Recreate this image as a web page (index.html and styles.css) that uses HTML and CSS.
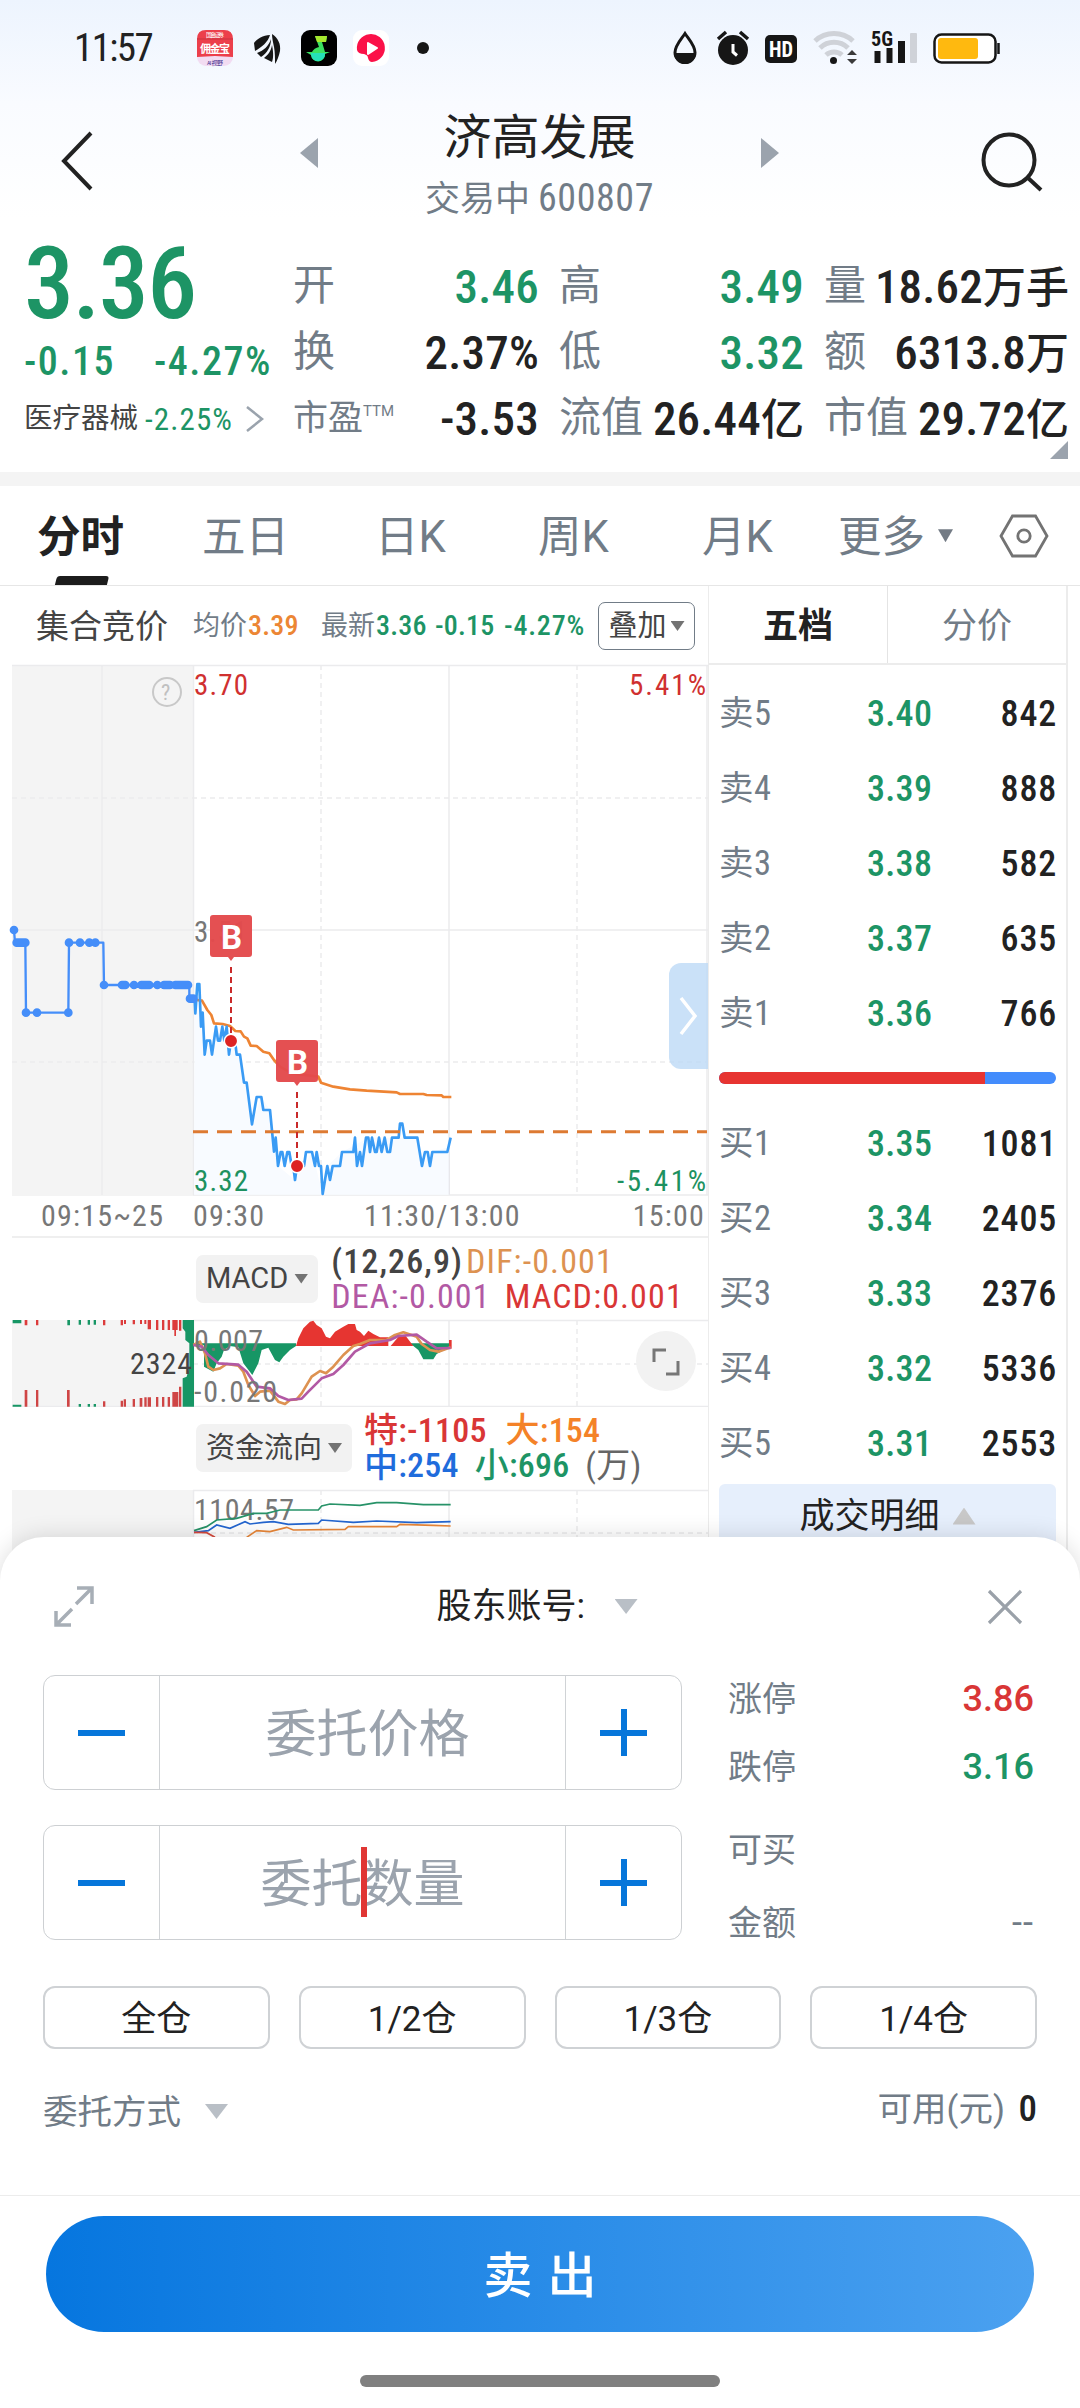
FILE: index.html
```html
<!DOCTYPE html>
<html lang="zh-CN">
<head>
    <meta charset="UTF-8">
    <meta name="viewport" content="width=device-width, initial-scale=1.0">
    <title>济高发展 600807</title>
    <link rel="stylesheet" href="styles.css">
</head>
<body>
    <div class="top">
        <div class="statusbar">
            <span class="time">11:57</span>
            <svg class="app-icons" width="240" height="40" viewBox="193 28 240 40">
                <rect x="197" y="30" width="36" height="36" rx="9" fill="#f2dcf2"/>
                <path d="M197 39q0-9 9-9h18q9 0 9 9v18l-18-1-18 1z" fill="#ec3f4b"/>
                <path d="M197 39h36" stroke="#c93440"/>
                <text x="206" y="37" font-size="6" fill="#fff" textLength="18">国金证券</text>
                <text x="200" y="53" font-size="11" font-weight="700" fill="#fff" textLength="30">佣金宝</text>
                <text x="207" y="65" font-size="6" fill="#3c2a8c" textLength="16">AI 视野</text>
                <path d="M272 34c6 4 9 10 8 17-1 5-3 10-5 13 0-6 0-12-1-17-1-5-2-9-2-13zM270 35c-7 0-13 4-16 8l1 8c7-4 13-9 15-16zM271 39c-2 7-8 12-14 14l4 4c6-4 10-10 10-18zM272 45c-1 6-4 10-8 13l8 4c2-5 1-12 0-17z" fill="#161616"/>
                <rect x="301" y="30" width="36" height="36" rx="9" fill="#000"/>
                <path d="M315 36h12l-1 6h-4l3 10h5l-5 2a7 7 0 0 1-14 1l-5-3h6q2-4 7-5z" fill="#3be060"/>
                <path d="M311 53h14a7 7 0 0 1-14 2z" fill="#26e0b8"/>
                <path d="M315 36h12l-1 6h-9z" fill="#a6e82e"/>
                <rect x="353" y="30" width="36" height="36" rx="9" fill="#fff"/>
                <path d="M357 50a14 14 0 1 1 15 12q-3 0-4-4 0-3-4-4-6 0-7-4z" fill="#fb1148"/>
                <path d="M368 43l9 5-9 6z" fill="#fff" stroke="#fff" stroke-width="2" stroke-linejoin="round"/>
                <circle cx="423" cy="48" r="6" fill="#161616"/>
            </svg>
            <svg class="sys-icons" width="332" height="40" viewBox="672 28 332 40">
                <path d="M686 33.500c4 6 10 12 10 19a10 10 0 0 1-20 0c0-7 6-13 10-19z" fill="none" stroke="#161616" stroke-width="3"/>
                <path d="M675 53h22a11 11 0 0 1-22 0z" fill="#161616"/>
                <circle cx="734" cy="50" r="15" fill="#161616"/>
                <path d="M719 39l8-7M749 39l-8-7" stroke="#161616" stroke-width="3.500"/>
                <path d="M734 44v8l4 3.500" stroke="#fff" stroke-width="3" fill="none"/>
                <rect x="766" y="35" width="32" height="28" rx="5" fill="#161616"/>
                <text x="770" y="57" font-size="22" font-weight="700" fill="#fff" textLength="24" lengthAdjust="spacingAndGlyphs">HD</text>
                <g fill="none" stroke="#cfd2d8" stroke-width="5">
                    <path d="M816 41a28 28 0 0 1 38 0M821 48a20 20 0 0 1 28 0M827 55a12 12 0 0 1 16 0"/>
                </g>
                <circle cx="834.500" cy="60.500" r="3.500" fill="#161616"/>
                <path d="M848 55l5-5 5 5zM848 59l5 5 5-5z" fill="#3a3a3a"/>
                <text x="872" y="46" font-size="20" font-weight="700" fill="#161616" textLength="22" lengthAdjust="spacingAndGlyphs">5G</text>
                <path d="M875.500 51h6v12h-6zM887.500 48h6v15h-6zM899 41h7v22h-7z" fill="#161616"/>
                <rect x="911" y="33" width="7" height="30" rx="1" fill="#cfd2d8"/>
                <rect x="935.500" y="34.500" width="61" height="28" rx="7" fill="#fff" stroke="#161616" stroke-width="2.500"/>
                <rect x="939" y="38" width="40" height="21" rx="3" fill="#ffb90f"/>
                <path d="M999.500 43v11" stroke="#161616" stroke-width="2.500"/>
            </svg>
        </div>

        <div class="header">
            <svg class="back" width="34" height="60" viewBox="0 0 34 60"><path d="M31 2L4 30l27 28" fill="none" stroke="#222" stroke-width="4"/></svg>
            <i class="tri-left"></i>
            <div class="title">
                <h1>济高发展</h1>
                <p>交易中 <span class="code">600807</span></p>
            </div>
            <i class="tri-right"></i>
            <svg class="search" width="64" height="64" viewBox="0 0 64 64"><g fill="none" stroke="#222" stroke-width="4"><circle cx="29" cy="29" r="25.500"/><path d="M47 46l14 13"/></g></svg>
        </div>
    </div>

    <div class="quote">
        <div class="main-price">
            <div class="price">3.36</div>
            <div class="change"><span>-0.15</span><span>-4.27%</span></div>
            <div class="sector">医疗器械 <span>-2.25%</span>
                <svg width="20" height="28" viewBox="0 0 20 28"><path d="M2 2l15 12L2 26" fill="none" stroke="#9aa3ad" stroke-width="2.500"/></svg>
            </div>
        </div>
        <dl class="stats">
            <div><dt>开</dt><dd class="green">3.46</dd></div>
            <div><dt>高</dt><dd class="green">3.49</dd></div>
            <div><dt>量</dt><dd>18.62<b>万手</b></dd></div>
            <div><dt>换</dt><dd>2.37%</dd></div>
            <div><dt>低</dt><dd class="green">3.32</dd></div>
            <div><dt>额</dt><dd>6313.8<b>万</b></dd></div>
            <div><dt class="pe">市盈<sup>TTM</sup></dt><dd>-3.53</dd></div>
            <div><dt>流值</dt><dd>26.44<b>亿</b></dd></div>
            <div><dt>市值</dt><dd>29.72<b>亿</b></dd></div>
        </dl>
        <i class="corner"></i>
    </div>

    <div class="tabs">
        <span class="tab active">分时</span>
        <span class="tab">五日</span>
        <span class="tab">日K</span>
        <span class="tab">周K</span>
        <span class="tab">月K</span>
        <span class="tab more">更多<i class="tri-down"></i></span>
        <svg class="gear" width="50" height="44" viewBox="0 0 50 44"><g fill="none" stroke="#737373" stroke-width="2.800"><path d="M2 22L13.500 2h23L48 22 36.500 42h-23z"/><circle cx="25" cy="22" r="6.200"/></g></svg>
    </div>

    <div class="market">
        <div class="charts">
            <div class="chart-head">
                <span class="auction">集合竞价</span>
                <span class="lbl">均价</span><span class="val orange">3.39</span>
                <span class="lbl latest">最新</span><span class="val green">3.36</span>
                <span class="val green delta">-0.15</span>
                <span class="val green pct">-4.27%</span>
                <span class="overlay-btn">叠加<i class="tri-down"></i></span>
            </div>

            <div class="price-plot">
                <svg width="708" height="532" viewBox="0 664 708 532">
                    <rect x="12" y="665" width="181.500" height="531" fill="#f4f4f4"/>
                    <g class="grid">
                        <path d="M12 665.500h696M193 930h515M12 930h181M102 665v530M193.500 665v530M449 665v530M707 665v530M193 1195h515"/>
                        <path class="dash" d="M12 798h696M12 1062h696M321 665v530M577 665v530"/>
                    </g>
                    <circle cx="167" cy="692" r="14" fill="none" stroke="#c8c8c8" stroke-width="2"/>
                    <text x="161" y="700" font-size="22" fill="#c0c0c0">?</text>
                    <g transform="translate(0 880) scale(.33333)" fill="none" stroke-linejoin="round">
                        <path fill="#f8fbff" d="M584 356L598 330 603 440 614 524 648 440 705 482 720 524 740 608 756 733 784 651 810 690 822 815 834 858 885 900 936 816 968 942 982 858 1026 816 1105 773 1196 773 1252 773 1266 858 1297 816 1348 800V944H582z"/>
                        <path stroke="#e8e8ec" stroke-width="4" d="M1348 780v164"/>
                        <path stroke="#ee8433" stroke-width="8" d="M590 360L606 362 622 390 634 405 642 430 668 432 690 438 706 453 722 454 732 470 742 475 752 497 770 498 790 515 808 520 822 540 840 560 875 580 955 590 963 608 1000 620 1050 628 1100 632 1190 637 1200 642 1270 642 1280 645 1325 646 1330 651 1354 651"/>
                        <path stroke="#3a9bf4" stroke-width="8" d="M584 356L586 400 592 312 598 312 603 440 608 398 614 524 620 482 630 482 636 524 648 440 654 482 660 482 667 440 673 482 680 440 687 524 693 482 705 482 710 524 720 524 732 608 740 608 756 733 770 651 784 651 790 690 810 690 822 815 827 773 834 858 842 816 847 816 854 858 862 816 868 816 875 858 880 858 885 900 891 858 912 858 918 816 936 816 945 858 950 816 957 858 963 858 968 942 982 858 990 900 998 858 1020 858 1026 816 1060 816 1065 773 1071 858 1080 816 1086 858 1098 773 1105 773 1110 816 1116 773 1125 816 1130 816 1137 773 1145 816 1154 773 1162 816 1170 816 1176 773 1196 773 1200 731 1207 731 1214 773 1252 773 1266 858 1275 816 1283 816 1290 858 1297 816 1342 816 1352 773"/>
                        <path stroke="#458ef9" stroke-width="7" d="M42 150L45 188H76L78 398H205L207 188H310L312 315H568V356H585"/>
                        <path stroke="#458ef9" stroke-width="26" stroke-linecap="round" d="M42 150h0M50 188h26M78 398h0M111 398h0M205 398h0M207 188h0M240 188h0M268 188h0M286 188h0M312 315h0M366 315h10M402 315h0M424 315h24M472 315h0M492 315h18M526 315h38M570 356h10"/>
                    </g>
                    <path d="M193 1131.700h514" stroke="#dd7a32" stroke-width="3" stroke-dasharray="15 9"/>
                    <text x="194" y="942" font-size="29" fill="#777" textLength="53">3.51</text>
                    <g stroke="#c92a2a" stroke-width="2" stroke-dasharray="6 4">
                        <path d="M231 967v66M297 1092v68"/>
                    </g>
                    <g fill="#e34a4c" fill-opacity=".97">
                        <path d="M213 915h36q3 0 3 3v36q0 3-3 3h-15l-3 4-3-4h-15q-3 0-3-3v-36q0-3 3-3z"/>
                        <path d="M279 1040h36q3 0 3 3v36q0 3-3 3h-15l-3 4-3-4h-15q-3 0-3-3v-36q0-3 3-3z"/>
                    </g>
                    <g fill="#dd2222" stroke="#fff" stroke-width="1.500"><circle cx="231" cy="1041" r="6.700"/><circle cx="297" cy="1166" r="6.700"/></g>
                    <g class="marks"><text x="231.500" y="949">B</text><text x="297.500" y="1074">B</text></g>
                    <text x="194" y="695" font-size="29" fill="#d03030" textLength="54">3.70</text>
                    <text x="629" y="695" font-size="29" fill="#d03030" textLength="77">5.41%</text>
                    <text x="194" y="1191" font-size="29" fill="#1d9160" textLength="54">3.32</text>
                    <text x="617" y="1191" font-size="29" fill="#1d9160" textLength="89">-5.41%</text>
                </svg>
                <span class="expand-side"><svg width="20" height="40" viewBox="0 0 20 40"><path d="M2 2l14 18L2 38" fill="none" stroke="#fff" stroke-width="3.500"/></svg></span>
            </div>

            <div class="axis"><span>09:15~25</span><span>09:30</span><span>11:30/13:00</span><span>15:00</span></div>

            <div class="indicator">
                <span class="pill">MACD<i class="tri-down"></i></span>
                <div class="figures macd">
                    <div><span class="dark">(12,26,9)</span><span class="dif">DIF:-0.001</span></div>
                    <div><span class="dea">DEA:-0.001</span><span class="red">MACD:0.001</span></div>
                </div>
            </div>

            <div class="macd-plot">
                <svg width="708" height="88" viewBox="0 1319 708 88">
                    <rect x="12" y="1320" width="181.500" height="87" fill="#f4f4f4"/>
                    <g class="grid"><path d="M193 1320.500h515M12 1406.500h696M193.500 1320v86M449 1320v86"/><path class="dash" d="M193 1364h515M321 1320v86M577 1320v86"/></g>
                    <g transform="translate(0 1200) scale(.33333)">
                        <path fill="#179665" d="M548 360H582V620H548V535L560 530 568 500V430L556 420V395L548 385zM38 360h26v10H38zM38 614h26v6H38zM202 360h8v16h-8zM236 360h7v14h-7zM263 360h7v14h-7zM281 360h7v14h-7zM236 612h7v8h-7zM263 612h7v8h-7zM281 612h7v8h-7z"/>
                        <path fill="#dc3b3b" d="M74 360h8v16h-8zM108 360h7v16h-7zM309 360h7v16h-7zM362 360h7v16h-7zM372 360h6v12h-6zM398 360h7v13h-7zM420 360h6v12h-6zM433 360h6v12h-6zM443 360h10v28h-10zM468 360h7v30h-7zM486 360h7v30h-7zM503 360h7v30h-7zM517 360h16v30h-5v18h-5v-18h-6zM537 360h7v32h-7z"/>
                        <path fill="#cf4545" d="M74 570h8v50h-8zM108 570h7v50h-7zM201 570h8v50h-8zM309 604h7v16h-7zM362 602h7v18h-7zM371 598h7v22h-7zM398 597h7v23h-7zM419 594h8v26h-8zM433 592h20v28h-20zM468 591h7v29h-7zM486 591h7v29h-7zM503 591h7v29h-7zM517 576h18v44h-18zM537 560h7v60h-7z"/>
                        <path fill="#f4f4f4" d="M440 590h3v30h-3z"/>
                        <path fill="#179665" d="M584 430H888V438L870 450 850 470 838 487 825 480 805 443 785 450 775 490 757 525 730 490 715 442 690 438 672 450 665 470 650 490 640 515 612 500V436H584zM1230 430H1352V440L1310 462 1300 478H1270L1255 450z"/>
                        <path fill="#e63531" d="M888 438L895 415 910 385 930 365 940 362 950 375 965 385 978 410 990 415 1005 395 1030 380 1045 372H1065L1070 390 1080 395 1092 408 1105 392 1120 402 1140 412H1165V438zM1172 438L1200 405 1215 405 1240 438zM1347 420h8v26h-8z"/>
                        <g fill="none" stroke-width="8" stroke-linejoin="round">
                            <path stroke="#dd9251" d="M580 435L600 425 615 460 625 500 640 510 660 505 680 492 715 497 730 515 745 555 765 588 780 575 810 572 835 605 855 612 870 600 890 598 905 580 935 530 960 513 978 520 1000 500 1030 465 1060 438 1080 432 1110 420 1160 420 1185 405 1210 397 1235 405 1250 410 1265 432 1290 450 1315 455 1352 442"/>
                            <path stroke="#b259a4" d="M580 435L605 440 625 465 655 490 715 494 740 515 770 560 810 565 835 588 865 600 905 596 925 575 965 535 1000 522 1030 495 1065 455 1110 430 1170 420 1195 408 1250 404 1280 425 1310 445 1352 444"/>
                        </g>
                    </g>
                    <g font-size="30" fill="#777"><text x="194" y="1351" textLength="69">0.007</text><text x="194" y="1402" textLength="83">-0.020</text></g>
                    <text x="130" y="1374" font-size="30" fill="#444" textLength="62">2324</text>
                    <circle cx="666" cy="1361" r="30" fill="#f2f2f2"/>
                    <path d="M654 1362v-12h12M666 1374h12v-13" fill="none" stroke="#777" stroke-width="3"/>
                </svg>
            </div>

            <div class="indicator flow-row">
                <span class="pill">资金流向<i class="tri-down"></i></span>
                <div class="figures flow">
                    <div><span class="red">特:-1105</span><span class="amber">大:154</span></div>
                    <div><span class="blue">中:254</span><span class="green">小:696</span><span class="unit">(万)</span></div>
                </div>
            </div>

            <div class="flow-plot">
                <svg width="708" height="110" viewBox="0 1489 708 110">
                    <rect x="12" y="1490" width="181.500" height="110" fill="#f4f4f4"/>
                    <g class="grid"><path d="M193 1490.500h515M193.500 1490v110M449 1490v110"/><path class="dash" d="M193 1533h515M321 1490v110M577 1490v110"/></g>
                    <text x="194" y="1520" font-size="30" fill="#777" textLength="100">1104.57</text>
                    <g transform="translate(0 1200) scale(.33333)" fill="none" stroke-width="5">
                        <path stroke="#279268" d="M582 992L620 980 650 960 710 955 760 940 800 940 840 930 955 930 965 918 990 912 1080 916 1130 908 1190 908 1270 914 1352 914"/>
                        <path stroke="#2466d0" d="M582 997L625 992 650 975 690 985 735 965 750 972 790 967 820 965 865 973 955 970 965 960 1060 967 1130 963 1250 968 1352 965"/>
                        <path stroke="#e88638" d="M740 1012L770 992 810 995 860 982 880 990 1035 988 1045 980 1190 980 1200 973 1300 976 1352 978"/>
                        <path stroke="#d64a3c" d="M582 997L620 998 645 1012"/>
                    </g>
                </svg>
            </div>
        </div>

        <div class="book">
            <div class="book-tabs"><span class="active">五档</span><span>分价</span></div>
            <ul>
                <li><span>卖5</span><em>3.40</em><b>842</b></li>
                <li><span>卖4</span><em>3.39</em><b>888</b></li>
                <li><span>卖3</span><em>3.38</em><b>582</b></li>
                <li><span>卖2</span><em>3.37</em><b>635</b></li>
                <li><span>卖1</span><em>3.36</em><b>766</b></li>
            </ul>
            <div class="ratio"><i></i></div>
            <ul>
                <li><span>买1</span><em>3.35</em><b>1081</b></li>
                <li><span>买2</span><em>3.34</em><b>2405</b></li>
                <li><span>买3</span><em>3.33</em><b>2376</b></li>
                <li><span>买4</span><em>3.32</em><b>5336</b></li>
                <li><span>买5</span><em>3.31</em><b>2553</b></li>
            </ul>
            <div class="detail">成交明细<i class="tri-up"></i></div>
        </div>
    </div>

    <div class="sheet">
        <div class="sheet-head">
            <svg width="42" height="42" viewBox="0 0 42 42"><g fill="none" stroke="#a7aeb6" stroke-width="3.500"><path d="M24 2h15v16M38 3L23 18M18 39H3V25M4 38l15-15"/></g></svg>
            <div class="account">股东账号:<i class="tri-down"></i></div>
            <svg width="36" height="36" viewBox="0 0 36 36"><path d="M2 2l32 32M34 2L2 34" stroke="#9aa1a9" stroke-width="3.200"/></svg>
        </div>

        <div class="order">
            <div class="inputs">
                <div class="stepper"><i class="minus"></i><span>委托价格</span><i class="plus"></i></div>
                <div class="stepper qty"><i class="minus"></i><span>委托<u></u>数量</span><i class="plus"></i></div>
            </div>
            <dl class="limits">
                <div><dt>涨停</dt><dd class="red">3.86</dd></div>
                <div><dt>跌停</dt><dd class="green">3.16</dd></div>
                <div class="buyable"><dt>可买</dt><dd></dd></div>
                <div class="amount"><dt>金额</dt><dd>--</dd></div>
            </dl>
        </div>

        <div class="quick"><span>全仓</span><span>1/2仓</span><span>1/3仓</span><span>1/4仓</span></div>

        <div class="method">
            <span>委托方式<i class="tri-down"></i></span>
            <span class="available">可用(元) <b>0</b></span>
        </div>

        <div class="action"><button class="sell">卖 出</button></div>
        <div class="home-bar"></div>
    </div>
</body>
</html>
```

FILE: styles.css
```css
* {
    box-sizing: border-box;
    margin: 0;
    padding: 0;
}

body {
    width: 1080px;
    height: 2408px;
    overflow: hidden;
    background: #fff;
    color: #222;
    font-family: Roboto, "Noto Sans CJK SC", sans-serif;
    font-stretch: 87.5%;
    font-weight: 400;
    line-height: 1;
    white-space: nowrap;
}

svg {
    display: block;
    flex: none;
}

i, em, b {
    font-style: normal;
    font-weight: 500;
}

.green { color: #1d9465; }
.red { color: #d93636; }
.orange { color: #ec8634; }
.amber { color: #f48228; }
.blue { color: #1f6cdc; }
.dark { color: #444; }
.dif { color: #dd9251; }
.dea { color: #b259a4; }
.unit { color: #666; }

/* triangles */
.tri-down, .tri-up, .tri-left, .tri-right {
    display: inline-block;
    flex: none;
    background: #737b85;
}

.tri-down { clip-path: polygon(0 0, 100% 0, 50% 100%); }
.tri-up { clip-path: polygon(50% 0, 100% 100%, 0 100%); }
.tri-left { clip-path: polygon(100% 0, 100% 100%, 0 50%); }
.tri-right { clip-path: polygon(0 0, 100% 50%, 0 100%); }

/* status bar and title */
.top {
    height: 230px;
    background: linear-gradient(#edf4fe, #f9fbff 45%, #fff 95%);
}

.statusbar {
    display: flex;
    align-items: center;
    height: 96px;
    padding: 0 77px 0 74px;
}

.time {
    width: 119px;
    font-size: 39px;
    letter-spacing: -1.6px;
}

.sys-icons {
    margin-left: auto;
}

.header {
    display: flex;
    height: 134px;
    padding: 0 36px 0 60px;
}

.back { margin-top: 35px; }
.header .tri-left, .header .tri-right {
    width: 18px;
    height: 30px;
    margin-top: 42px;
    background: #9ba3ad;
}

.header .tri-left { margin-left: 206px; }
.search { margin: 35px 0 0 auto; }

.title {
    width: 443px;
    text-align: center;
}

.title h1 {
    margin-top: 16px;
    font-size: 48px;
    font-weight: 400;
    line-height: 52px;
}

.title p {
    margin-top: 15px;
    font-size: 35px;
    line-height: 38px;
    color: #717c87;
}

.code {
    font-size: 38px;
    letter-spacing: .6px;
}

/* quote */
.quote {
    position: relative;
    display: flex;
    height: 256px;
    border-bottom: 14px solid #f4f4f4;
}

.main-price {
    width: 293px;
    padding: 0 0 0 24px;
    color: #1d9465;
}

.price {
    height: 107px;
    font-size: 100px;
    font-weight: 500;
    line-height: 107px;
    letter-spacing: -1.5px;
}

.change {
    display: flex;
    gap: 39px;
    margin-top: 1px;
    font-size: 40px;
    font-weight: 500;
    line-height: 48px;
    letter-spacing: 1.5px;
}

.sector {
    display: flex;
    align-items: center;
    gap: 7px;
    margin-top: 13px;
    height: 40px;
    font-size: 28.500px;
    color: #444;
}

.sector span {
    font-size: 31px;
    letter-spacing: 1.1px;
    color: #1d9465;
}

.sector svg { margin-left: 5px; }

.stats {
    display: grid;
    grid-template-columns: 246px 245px 245px;
    grid-template-rows: repeat(3, 66px);
    column-gap: 20px;
    padding-top: 23px;
}

.stats div {
    display: flex;
    align-items: center;
    justify-content: space-between;
}

.stats dt {
    font-size: 42px;
    color: #717c87;
}

.stats .pe { font-size: 35px; }
.stats sup {
    font-size: 15px;
    font-stretch: 100%;
    vertical-align: 14px;
}

.stats dd {
    font-size: 47px;
    font-weight: 500;
    letter-spacing: .2px;
}

.stats dd b {
    font-size: 43px;
    letter-spacing: 0;
}

.corner {
    position: absolute;
    right: 12px;
    bottom: 13px;
    width: 18px;
    height: 18px;
    background: #9ba3ad;
    clip-path: polygon(100% 0, 100% 100%, 0 100%);
}

/* period tabs */
.tabs {
    display: grid;
    grid-template-columns: 165px 173px 163px 164px 136px 150px 1fr;
    align-items: center;
    height: 100px;
    padding: 5px 0 0 37px;
    border-bottom: 1px solid #e6e6e6;
    font-size: 43.500px;
    font-stretch: 100%;
    color: #717c87;
}

.tab.active {
    position: relative;
    font-weight: 700;
    color: #222;
}

.tab.active::after {
    content: "";
    position: absolute;
    left: 19px;
    bottom: -25px;
    width: 52px;
    height: 9px;
    background: #1c1c1c;
    border-radius: 3px 3px 0 0;
    transform: skewX(-14deg);
}

.tab.more i {
    width: 15px;
    height: 13px;
    margin-left: 13px;
    vertical-align: 10px;
}

.gear { margin: -5px 31px 0 auto; }

/* chart column */
.market {
    display: grid;
    grid-template-columns: 708px 360px;
    height: 951px;
}

.chart-head {
    display: flex;
    align-items: center;
    height: 78px;
    padding: 2px 0 0 36px;
}

.auction {
    width: 157px;
    font-size: 33px;
    color: #444;
}

.lbl {
    width: 55px;
    font-size: 27px;
    color: #717c87;
}

.val {
    width: 48px;
    font-size: 28px;
    font-weight: 500;
    letter-spacing: .2px;
}

.latest { margin-left: 25px; }
.delta { width: 60px; margin-left: 11px; }
.pct { width: 81px; margin-left: 9px; letter-spacing: .8px; }

.overlay-btn {
    display: flex;
    align-items: center;
    justify-content: center;
    gap: 4px;
    width: 97px;
    height: 48px;
    margin-left: 13px;
    border: 1px solid #717c87;
    border-radius: 7px;
    font-size: 29px;
    color: #444;
}

.overlay-btn i, .pill i {
    width: 14px;
    height: 10px;
    background: #737373;
}

.price-plot { position: relative; }
.grid {
    fill: none;
    stroke: #ebebed;
    stroke-width: 1.5;
}

.dash { stroke-dasharray: 5 4; }

.marks {
    fill: #fff;
    font-size: 33px;
    font-stretch: 100%;
    font-weight: 700;
    text-anchor: middle;
}

.expand-side {
    position: absolute;
    top: 299px;
    right: 0;
    width: 39px;
    height: 106px;
    padding: 33px 0 0 10px;
    background: rgba(189, 218, 246, .8);
    border-radius: 12px 0 0 12px;
}

.axis {
    display: grid;
    grid-template-columns: 152px 171px 200px 1fr;
    align-items: center;
    height: 42px;
    margin-left: 12px;
    padding: 0 3px 1px 29px;
    border-bottom: 2px solid #efefef;
    font-size: 30px;
    letter-spacing: 1.2px;
    color: #777;
}

.axis span:last-child { text-align: right; }

.indicator {
    display: flex;
    align-items: center;
    height: 81px;
    padding-left: 196px;
}

.indicator.flow-row { height: 82px; }

.pill {
    display: flex;
    align-items: center;
    gap: 6px;
    height: 48px;
    padding: 0 10px;
    background: #f2f2f2;
    border-radius: 7px;
    font-size: 29px;
    font-stretch: 100%;
    color: #444;
}

.macd-plot { height: 88px; }

.figures {
    font-weight: 500;
    font-size: 34px;
    line-height: 35px;
}

.macd {
    margin-left: 13px;
    letter-spacing: 1.1px;
}

.flow {
    margin-left: 12px;
    letter-spacing: .2px;
}

.figures span { margin-right: 16px; }
.flow .red { margin-right: 19px; }
.macd .dark { margin-right: 3px; }
.macd .dea { margin-right: 14px; }
.figures .unit, .macd .dif, .macd .dea, .macd .red { font-weight: 400; }

/* order book */
.book {
    border: solid #ececec;
    border-width: 0 2px 0 1px;
    height: 990px;
}

.book-tabs {
    display: flex;
    height: 79px;
    border-bottom: 2px solid #ececec;
}

.book-tabs span {
    flex: 1;
    font-size: 35px;
    line-height: 81px;
    text-align: center;
    color: #717c87;
}

.book-tabs .active {
    border-right: 1px solid #e4e4e4;
    font-weight: 700;
    color: #222;
}

.book ul {
    padding: 11px 9px 0 10px;
    list-style: none;
}

.book li {
    display: grid;
    grid-template-columns: 148px 1fr auto;
    align-items: center;
    height: 75px;
    font-size: 36px;
}

.book li span {
    font-size: 34.500px;
    letter-spacing: .5px;
    color: #717c87;
}

.book li em {
    letter-spacing: .3px;
    color: #1d9465;
}

.book li b { letter-spacing: .8px; }

.ratio {
    height: 12px;
    margin: 21px 10px 11px 10px;
    background: #438cfc;
    border-radius: 6px;
    overflow: hidden;
}

.ratio i {
    display: block;
    width: 266px;
    height: 12px;
    background: #e73431;
}

.detail {
    display: flex;
    align-items: center;
    justify-content: center;
    gap: 13px;
    height: 62px;
    margin: 3px 10px 0;
    padding-top: 2px;
    background: #e6effc;
    border-radius: 6px;
    font-size: 35px;
}

.detail i {
    width: 23px;
    height: 17px;
    background: #c8c8c8;
}

/* trade sheet */
.sheet {
    position: relative;
    height: 871px;
    padding-top: 1px;
    background: #fff;
    border-radius: 44px 44px 0 0;
    box-shadow: 0 0 24px rgba(0, 0, 0, .14);
}

.sheet-head {
    display: flex;
    align-items: center;
    justify-content: space-between;
    height: 137px;
    padding: 0 57px 0 53px;
}

.account {
    display: flex;
    align-items: center;
    margin-left: -8px;
    font-size: 35px;
}

.account i, .method i {
    width: 23px;
    height: 15px;
    margin-left: 30px;
    background: #b9bfc6;
}

.order {
    display: flex;
    gap: 46px;
    height: 311px;
    padding: 0 46px 0 43px;
}

.inputs { width: 639px; }

.stepper {
    display: grid;
    grid-template-columns: 115px 1fr 115px;
    align-items: center;
    height: 115px;
    margin-bottom: 35px;
    border: 1px solid #cdd0d3;
    border-radius: 12px;
    font-size: 51px;
    color: #9ba3ad;
}

.stepper span {
    padding: 5px 0 0 10px;
    border: solid #d0d3d6;
    border-width: 0 1px;
    line-height: 108px;
    text-align: center;
}

.qty span { padding-left: 0; }

.stepper u {
    position: absolute;
    width: 6px;
    height: 70px;
    margin: 16px 0 0 -2px;
    background: #e03634;
}

.minus, .plus {
    justify-self: center;
    width: 47px;
    height: 47px;
    background: linear-gradient(#0676da, #0676da) center / 47px 6px no-repeat;
}

.plus {
    background: linear-gradient(#0676da, #0676da) center / 47px 6px no-repeat,
                linear-gradient(#0676da, #0676da) center / 6px 47px no-repeat;
}

.limits {
    flex: 1;
    font-size: 34px;
    color: #717c87;
}

.limits div {
    display: flex;
    align-items: center;
    justify-content: space-between;
    height: 69px;
    margin-top: -1px;
}

.limits div:first-child { margin-top: -11px; }
.limits dd {
    font-size: 36px;
    font-stretch: 100%;
    font-weight: 500;
}

.limits .buyable { margin-top: 14px; }
.limits .amount { margin-top: 4px; }
.limits .amount dd {
    font-weight: 400;
    letter-spacing: 1px;
}

.quick {
    display: grid;
    grid-template-columns: repeat(4, 1fr);
    gap: 29px;
    padding: 0 43px;
}

.quick span {
    height: 63px;
    padding-top: 2px;
    border: 2px solid #cfd2d5;
    border-radius: 12px;
    font-size: 35px;
    font-stretch: 100%;
    line-height: 59px;
    text-align: center;
}

.method {
    display: flex;
    justify-content: space-between;
    height: 146px;
    padding: 45px 43px 0;
    font-size: 34.500px;
    font-stretch: 100%;
    line-height: 36px;
    color: #717c87;
}

.method i {
    margin-left: 24px;
    vertical-align: 5px;
}

.available { margin-top: -3px; }
.available b {
    margin-left: 5px;
    font-size: 37px;
    font-stretch: 87.5%;
    color: #222;
}

.action {
    padding: 20px 46px 0;
    border-top: 1px solid #ececec;
}

.sell {
    display: block;
    width: 100%;
    height: 116px;
    padding-bottom: 6px;
    border: none;
    border-radius: 58px;
    background: linear-gradient(90deg, #0676df, #4ba1f0);
    font: 500 49px Roboto, "Noto Sans CJK SC", sans-serif;
    word-spacing: 3px;
    color: #fff;
}

.home-bar {
    width: 360px;
    height: 12px;
    margin: 43px auto 0;
    background: #808080;
    border-radius: 6px;
}
```
